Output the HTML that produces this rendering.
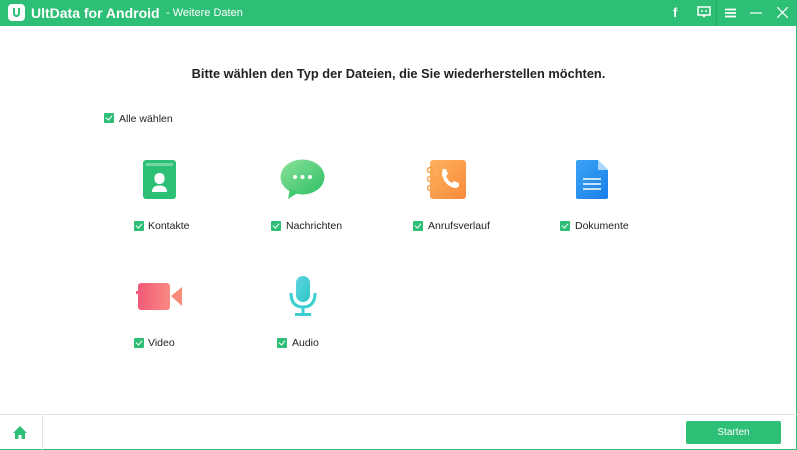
<!DOCTYPE html>
<html><head><meta charset="utf-8"><style>
*{margin:0;padding:0;box-sizing:border-box}
body{width:797px;height:450px;overflow:hidden;background:#fff;font-family:"Liberation Sans","DejaVu Sans",sans-serif;position:relative;color:#222}
.hdr{position:absolute;left:0;top:0;width:797px;height:26px;background:#2ebf76}
.brd{position:absolute;right:0;top:0;width:1px;height:450px;background:#2ebf76}
.brdb{position:absolute;left:0;bottom:0;width:797px;height:1px;background:#2ebf76}
.t{position:absolute;font-size:10.5px;white-space:nowrap}
.cb{position:absolute;width:10px;height:10px;background:#2ebf76;border-radius:1px}
.cb::after{content:"";position:absolute;left:3px;top:1px;width:3px;height:5px;border:solid #fff;border-width:0 1.5px 1.5px 0;transform:rotate(40deg)}
</style></head><body>
<div class="hdr">
 <div style="position:absolute;left:8px;top:4px;width:17px;height:17px;background:#fff;border-radius:4px"></div>
 <div style="position:absolute;left:13px;top:8px;width:7px;height:9px;border:2.5px solid #2ebf76;border-top:none;border-radius:0 0 4px 4px"></div>
 <div class="t" style="left:31px;top:5px;color:#fff;font-size:14px;font-weight:bold">UltData for Android</div>
 <div class="t" style="left:166px;top:7px;color:#fff;font-size:11px">- Weitere Daten</div>
 <div class="t" style="left:673px;top:5px;color:#fff;font-size:13px;font-weight:bold">f</div>
 <svg style="position:absolute;left:697px;top:6px" width="14" height="13"><rect x="1" y="1" width="12" height="8" fill="none" stroke="#fff" stroke-width="1.5"/><path d="M5 9 L7 12 L9 9" fill="#fff"/><circle cx="5" cy="5" r="1" fill="#fff"/><circle cx="9" cy="5" r="1" fill="#fff"/></svg>
 <div style="position:absolute;left:716px;top:0;width:1px;height:26px;background:#27a865"></div>
 <svg style="position:absolute;left:725px;top:8px" width="11" height="10"><path d="M0 1.5H11M0 5H11M0 8.5H11" stroke="#fff" stroke-width="1.8"/></svg>
 <svg style="position:absolute;left:750px;top:12px" width="12" height="2"><path d="M0 1H12" stroke="#fff" stroke-width="1.2"/></svg>
 <svg style="position:absolute;left:777px;top:7px" width="11" height="11"><path d="M0 0L11 11M11 0L0 11" stroke="#fff" stroke-width="1.2"/></svg>
</div>
<div class="brd"></div><div class="brdb"></div>
<div class="t" style="left:0;width:797px;text-align:center;top:66px;font-size:12.8px;font-weight:bold;color:#222">Bitte wählen den Typ der Dateien, die Sie wiederherstellen möchten.</div>
<div class="cb" style="left:104px;top:113px"></div><div class="t" style="left:119px;top:113px">Alle wählen</div>

<svg style="position:absolute;left:143px;top:160px" width="33" height="39"><rect x="0" y="0" width="33" height="39" rx="3" fill="#2ebf76"/><rect x="3" y="3" width="27" height="3" fill="#6fd8a0"/><rect x="11.5" y="13" width="10" height="11" rx="4.5" fill="#fff"/><path d="M9 32 Q9 25.5 16.5 25.5 Q24 25.5 24 32Z" fill="#fff"/></svg>
<div class="cb" style="left:134px;top:221px"></div><div class="t" style="left:148px;top:220px">Kontakte</div>

<svg style="position:absolute;left:280px;top:159px" width="45" height="40"><defs><linearGradient id="g1" x1="0" y1="0" x2="1" y2="1"><stop offset="0" stop-color="#8be29a"/><stop offset="1" stop-color="#2fbf65"/></linearGradient></defs><ellipse cx="22.5" cy="18" rx="22" ry="17.5" fill="url(#g1)"/><path d="M10 30 L8 40 L19 33Z" fill="#3fc86d"/><circle cx="15" cy="18" r="2" fill="#fff"/><circle cx="22.5" cy="18" r="2" fill="#fff"/><circle cx="30" cy="18" r="2" fill="#fff"/></svg>
<div class="cb" style="left:271px;top:221px"></div><div class="t" style="left:286px;top:220px">Nachrichten</div>

<svg style="position:absolute;left:427px;top:160px" width="40" height="39"><defs><linearGradient id="g2" x1="0" y1="0" x2="1" y2="1"><stop offset="0" stop-color="#fcb25c"/><stop offset="1" stop-color="#f98a3b"/></linearGradient></defs><rect x="3" y="0" width="36" height="39" rx="3" fill="url(#g2)"/><circle cx="3" cy="10" r="2.5" fill="none" stroke="#fba04a" stroke-width="1.5"/><circle cx="3" cy="19" r="2.5" fill="none" stroke="#fba04a" stroke-width="1.5"/><circle cx="3" cy="28" r="2.5" fill="none" stroke="#fba04a" stroke-width="1.5"/><path d="M16 9 L19 9 L21 14 L19 16 Q21 21 25 23 L27 21 L32 23 L32 26 Q31 28 28 28 Q18 26 15 15 Q15 10 16 9Z" fill="#fff"/></svg>
<div class="cb" style="left:413px;top:221px"></div><div class="t" style="left:428px;top:220px">Anrufsverlauf</div>

<svg style="position:absolute;left:576px;top:160px" width="32" height="39"><defs><linearGradient id="g3" x1="0" y1="0" x2="1" y2="1"><stop offset="0" stop-color="#3aa3f5"/><stop offset="1" stop-color="#1a7fe8"/></linearGradient></defs><path d="M2 0 H22 L32 10 V37 Q32 39 30 39 H2 Q0 39 0 37 V2 Q0 0 2 0Z" fill="url(#g3)"/><path d="M22 0 V10 H32Z" fill="#a9d5fb"/><path d="M7 19H25M7 24H25M7 29H25" stroke="#fff" stroke-width="1.6"/></svg>
<div class="cb" style="left:560px;top:221px"></div><div class="t" style="left:575px;top:220px">Dokumente</div>

<svg style="position:absolute;left:136px;top:283px" width="47" height="27"><defs><linearGradient id="g4" x1="0" y1="0" x2="1" y2="0"><stop offset="0" stop-color="#f25a7a"/><stop offset="1" stop-color="#fa8a80"/></linearGradient></defs><rect x="2" y="0" width="32" height="27" rx="3" fill="url(#g4)"/><path d="M35 13 L46 4 V23Z" fill="#f98a7a"/><rect x="0" y="8" width="2" height="3" fill="#f25a7a"/></svg>
<div class="cb" style="left:134px;top:338px"></div><div class="t" style="left:148px;top:337px">Video</div>

<svg style="position:absolute;left:288px;top:276px" width="30" height="40"><defs><linearGradient id="g5" x1="0" y1="0" x2="1" y2="1"><stop offset="0" stop-color="#5fd6e0"/><stop offset="1" stop-color="#2ec7c7"/></linearGradient></defs><rect x="8" y="0" width="14" height="26" rx="7" fill="url(#g5)"/><path d="M3 17 Q3 31 15 31 Q27 31 27 17" fill="none" stroke="#3ccfd2" stroke-width="3"/><path d="M15 31V38M7 38.5H23" stroke="#3ccfd2" stroke-width="3"/></svg>
<div class="cb" style="left:277px;top:338px"></div><div class="t" style="left:292px;top:337px">Audio</div>

<div style="position:absolute;left:0;top:414px;width:797px;height:1px;background:#e3e3e3"></div>
<div style="position:absolute;left:42px;top:414px;width:1px;height:36px;background:#e3e3e3"></div>
<svg style="position:absolute;left:13px;top:426px" width="14" height="13"><path d="M7 0 L14 7 H12 V13 H8.5 V9 H5.5 V13 H2 V7 H0Z" fill="#2ebf76"/></svg>
<div style="position:absolute;left:686px;top:421px;width:95px;height:23px;background:#2ebf76;border-radius:2px;color:#fff;font-size:10px;text-align:center;line-height:23px">Starten</div>
</body></html>
